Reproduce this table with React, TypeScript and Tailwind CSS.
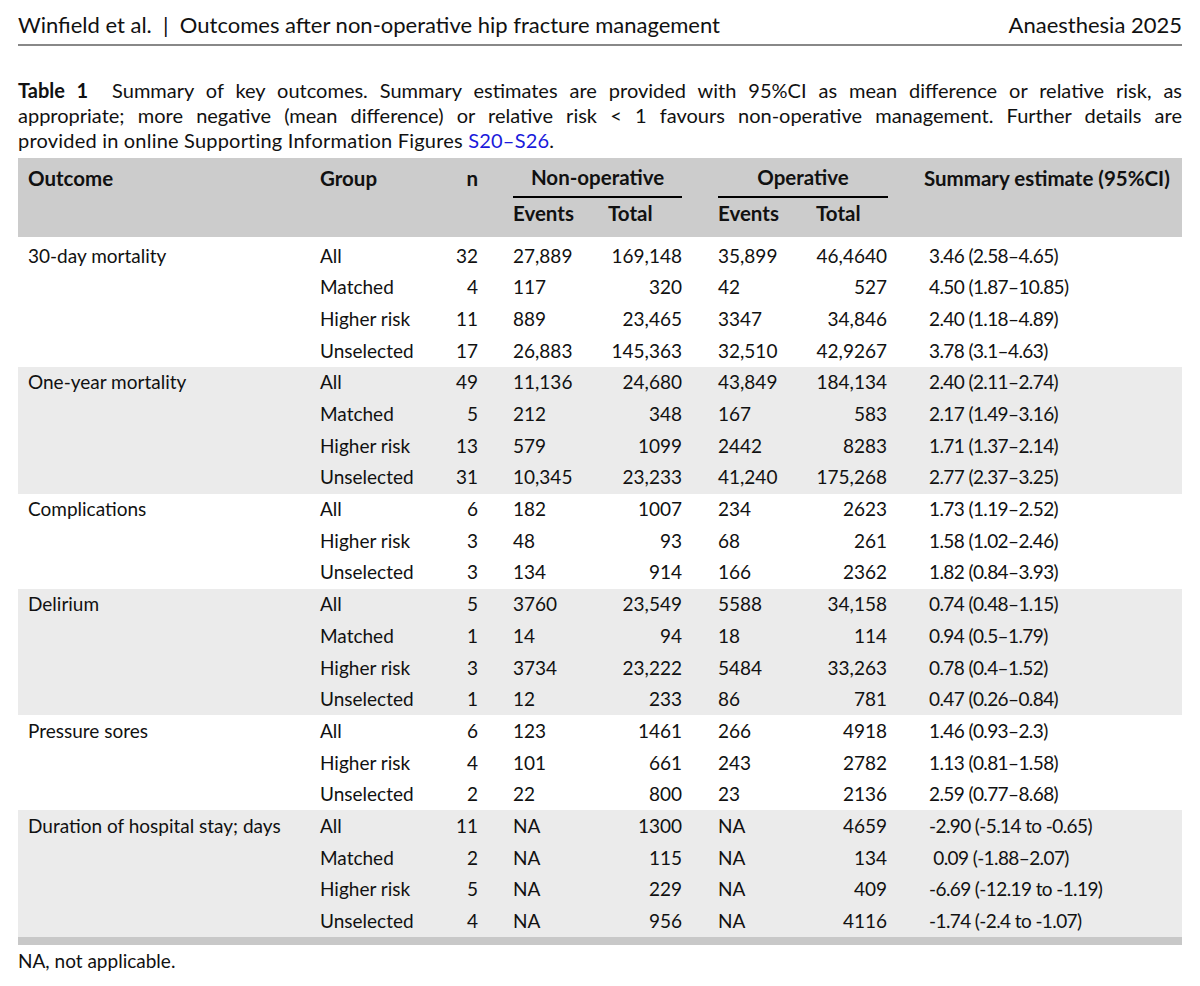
import React from "react";

type Row = [string, string, string, string, string, string, string, string];

const groups: Row[][] = [
  [
    ["30-day mortality", "All", "32", "27,889", "169,148", "35,899", "46,4640", "3.46 (2.58–4.65)"],
    ["", "Matched", "4", "117", "320", "42", "527", "4.50 (1.87–10.85)"],
    ["", "Higher risk", "11", "889", "23,465", "3347", "34,846", "2.40 (1.18–4.89)"],
    ["", "Unselected", "17", "26,883", "145,363", "32,510", "42,9267", "3.78 (3.1–4.63)"],
  ],
  [
    ["One-year mortality", "All", "49", "11,136", "24,680", "43,849", "184,134", "2.40 (2.11–2.74)"],
    ["", "Matched", "5", "212", "348", "167", "583", "2.17 (1.49–3.16)"],
    ["", "Higher risk", "13", "579", "1099", "2442", "8283", "1.71 (1.37–2.14)"],
    ["", "Unselected", "31", "10,345", "23,233", "41,240", "175,268", "2.77 (2.37–3.25)"],
  ],
  [
    ["Complications", "All", "6", "182", "1007", "234", "2623", "1.73 (1.19–2.52)"],
    ["", "Higher risk", "3", "48", "93", "68", "261", "1.58 (1.02–2.46)"],
    ["", "Unselected", "3", "134", "914", "166", "2362", "1.82 (0.84–3.93)"],
  ],
  [
    ["Delirium", "All", "5", "3760", "23,549", "5588", "34,158", "0.74 (0.48–1.15)"],
    ["", "Matched", "1", "14", "94", "18", "114", "0.94 (0.5–1.79)"],
    ["", "Higher risk", "3", "3734", "23,222", "5484", "33,263", "0.78 (0.4–1.52)"],
    ["", "Unselected", "1", "12", "233", "86", "781", "0.47 (0.26–0.84)"],
  ],
  [
    ["Pressure sores", "All", "6", "123", "1461", "266", "4918", "1.46 (0.93–2.3)"],
    ["", "Higher risk", "4", "101", "661", "243", "2782", "1.13 (0.81–1.58)"],
    ["", "Unselected", "2", "22", "800", "23", "2136", "2.59 (0.77–8.68)"],
  ],
  [
    ["Duration of hospital stay; days", "All", "11", "NA", "1300", "NA", "4659", "-2.90 (-5.14 to -0.65)"],
    ["", "Matched", "2", "NA", "115", "NA", "134", " 0.09 (-1.88–2.07)"],
    ["", "Higher risk", "5", "NA", "229", "NA", "409", "-6.69 (-12.19 to -1.19)"],
    ["", "Unselected", "4", "NA", "956", "NA", "4116", "-1.74 (-2.4 to -1.07)"],
  ],
];

const grid = "grid grid-cols-[292px_130px_48px_112px_92px_108px_97px_286px]";

function DataRow({ r }: { r: Row }) {
  return (
    <div className={`${grid} h-[31.7px] items-center`}>
      <div className="pl-[10px] whitespace-nowrap">{r[0]}</div>
      <div className="pl-[10px] whitespace-nowrap">{r[1]}</div>
      <div className="pr-[10px] text-right">{r[2]}</div>
      <div className="pl-[25px]">{r[3]}</div>
      <div className="pr-[10px] text-right">{r[4]}</div>
      <div className="pl-[26px]">{r[5]}</div>
      <div className="pr-[10px] text-right">{r[6]}</div>
      <div className="pl-[32px] whitespace-pre tracking-[-0.6px]">{r[7]}</div>
    </div>
  );
}

const jline = "text-justify [text-align-last:justify] whitespace-nowrap";

export default function App() {
  return (
    <div
      className="w-[1200px] h-[986px] bg-white text-[#111] px-[18px] pt-[12px]"
      style={{ fontFamily: "Lato, 'Noto Sans', sans-serif" }}
    >
      <div className="flex justify-between items-center h-[26px] text-[22px] leading-[26px]">
        <div>Winfield et al.&nbsp; |&nbsp; Outcomes after non-operative hip fracture management</div>
        <div>Anaesthesia 2025</div>
      </div>
      <div className="mt-[6px] h-[2px] bg-[#888]" />
      <div className="mt-[32px] text-[20px] leading-[25px]">
        <div className={jline}>
          <b>Table 1</b>&nbsp; Summary of key outcomes. Summary estimates are provided with 95%CI as mean difference or relative risk, as
        </div>
        <div className={jline}>
          appropriate; more negative (mean difference) or relative risk &lt; 1 favours non-operative management. Further details are
        </div>
        <div className="whitespace-nowrap tracking-[0.2px]">
          provided in online Supporting Information Figures <span className="text-[#1a1adb]">S20–S26</span>.
        </div>
      </div>
      <div className="mt-[5px] text-[19px]">
        <div className="bg-[#cccccc] h-[79px] font-bold text-[20.5px]">
          <div className={`${grid} h-[40px] items-center`}>
            <div className="pl-[10px]">Outcome</div>
            <div className="pl-[10px]">Group</div>
            <div className="pr-[10px] text-right">n</div>
            <div className="col-span-2 ml-[25px] mr-[10px] h-full flex flex-col justify-center border-b-2 border-black text-center">
              Non-operative
            </div>
            <div className="col-span-2 ml-[26px] mr-[9px] h-full flex flex-col justify-center border-b-2 border-black text-center">
              Operative
            </div>
            <div className="pl-[27px] whitespace-nowrap">Summary estimate (95%CI)</div>
          </div>
          <div className={`${grid} pt-[3px] leading-[24px]`}>
            <div />
            <div />
            <div />
            <div className="pl-[25px]">Events</div>
            <div className="pl-[8px]">Total</div>
            <div className="pl-[26px]">Events</div>
            <div className="pl-[16px]">Total</div>
            <div />
          </div>
        </div>
        <div className="mt-[3px]">
          {groups.map((g, gi) => (
            <div key={gi} className={gi % 2 === 1 ? "bg-[#ebebeb]" : "bg-white"}>
              {g.map((r, ri) => (
                <DataRow key={ri} r={r} />
              ))}
            </div>
          ))}
        </div>
        <div className="h-[8px] bg-[#c8c8c8]" />
      </div>
      <div className="mt-[4px] text-[19px] leading-[24px]">NA, not applicable.</div>
    </div>
  );
}
